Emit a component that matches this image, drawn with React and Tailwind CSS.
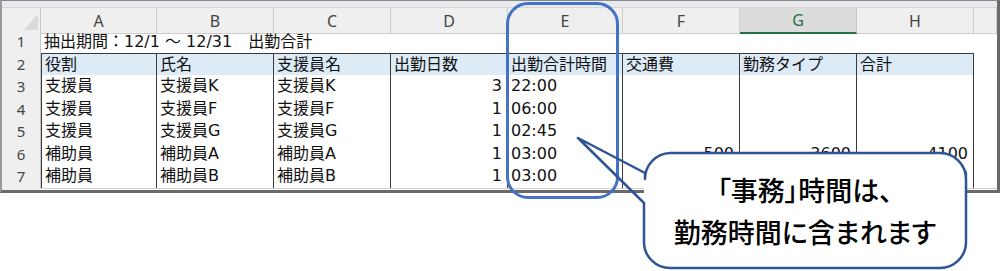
import React from 'react';

const letters = ['A', 'B', 'C', 'D', 'E', 'F', 'G', 'H', ''];

const rows = [
  ['役割', '氏名', '支援員名', '出勤日数', '出勤合計時間', '交通費', '勤務タイプ', '合計'],
  ['支援員', '支援員K', '支援員K', 3, '22:00', '', '', ''],
  ['支援員', '支援員F', '支援員F', 1, '06:00', '', '', ''],
  ['支援員', '支援員G', '支援員G', 1, '02:45', '', '', ''],
  ['補助員', '補助員A', '補助員A', 1, '03:00', 500, 3600, 4100],
  ['補助員', '補助員B', '補助員B', 1, '03:00', 500, 3600, 4100],
];

const rowHeights = ['h-[22px]', 'h-[23px]', 'h-[22px]', 'h-[23px]', 'h-[22px]', 'h-[23px]'];

function RowHead({ n }) {
  return (
    <div className="flex items-center justify-center bg-[#efefef] border-r border-b border-r-[#c8c8c8] border-b-[#dedede] text-[15px] text-[#444] font-['Noto_Sans',sans-serif]">
      {n}
    </div>
  );
}

function Cell({ value, header, first, col }) {
  const isNum = typeof value === 'number';
  const isTime = typeof value === 'string' && /^\d\d:\d\d$/.test(value);
  return (
    <div
      className={`flex items-center border-r border-b border-[#3a3a3a] overflow-hidden whitespace-nowrap text-[16px] text-[#111] ${
        header ? 'bg-[#ddebf7] border-t' : 'bg-white'
      } ${col === 0 ? 'border-l' : ''} ${isNum ? 'justify-end pr-[5px]' : 'pl-[3px]'} ${
        isNum || isTime ? "font-['DejaVu_Sans',sans-serif]" : ''
      }`}
    >
      {value}
    </div>
  );
}

export default function App() {
  return (
    <div className="relative w-[1000px] h-[271px] bg-white overflow-hidden font-['DejaVu_Sans','Noto_Sans_CJK_JP',sans-serif]">
      {/* Spreadsheet frame */}
      <div className="w-[1000px] border-t border-l-2 border-r-[3px] border-b-[3px] border-t-[#8a8a8a] border-l-[#9a9a9a] border-r-[#6a6a6a] border-b-[#6a6a6a]">
        <div className="h-[7px] bg-[#e9ebee] border-b border-[#d6d6d6]" />

        {/* Column headers */}
        <div className="grid grid-cols-[39px_116px_117px_117px_117px_115px_117px_117px_117px_1fr] h-[22px]">
          <div className="flex items-end justify-end bg-[#efefef] border-r border-b border-[#c8c8c8] pr-[2px] pb-[2px]">
            <svg width="15" height="17" viewBox="0 0 15 17">
              <polygon points="15,0 15,17 0,17" fill="#d9d9d9" />
            </svg>
          </div>
          {letters.map((l, i) =>
            l === 'G' ? (
              <div
                key={i}
                className="flex items-center justify-center bg-[#dcdcdc] border-r border-[#c8c8c8] border-b-2 border-b-[#217346] text-[16px] text-[#217346] font-['Noto_Sans',sans-serif]"
              >
                {l}
              </div>
            ) : (
              <div
                key={i}
                className="flex items-center justify-center bg-[#efefef] border-r border-b border-[#cdcdcd] text-[16px] text-[#444] font-['Noto_Sans',sans-serif]"
              >
                {l}
              </div>
            )
          )}
        </div>

        {/* Row 1: title */}
        <div className="grid grid-cols-[39px_116px_117px_117px_117px_115px_117px_117px_117px_1fr] h-[23px]">
          <RowHead n={1} />
          <div className="flex items-center pl-[3px] whitespace-nowrap text-[16px] text-[#111] overflow-visible">
            抽出期間：12/1 ～ 12/31　出勤合計
          </div>
        </div>

        {/* Rows 2-7 */}
        {rows.map((r, ri) => (
          <div
            key={ri}
            className={`grid grid-cols-[39px_116px_117px_117px_117px_115px_117px_117px_117px_1fr] ${rowHeights[ri]}`}
          >
            <RowHead n={ri + 2} />
            {r.map((v, ci) => (
              <Cell key={ci} value={v} header={ri === 0} col={ci} />
            ))}
            <div className="bg-white" />
          </div>
        ))}

        <div className="grid grid-cols-[39px_1fr] h-[2px]">
          <div className="bg-[#efefef]" />
          <div className="border-t border-[#d0d0d0]" />
        </div>
      </div>

      {/* Highlight around column E */}
      <div className="absolute left-[506px] top-[2px] w-[113px] h-[197px] rounded-[22px] border-[3px] border-[#4472c4]" />

      {/* Callout */}
      <svg className="absolute left-0 top-0 pointer-events-none" width="1000" height="271" viewBox="0 0 1000 271">
        <path
          d="M670 153 H940 A26 26 0 0 1 966 179 V242 A26 26 0 0 1 940 268 H670 A26 26 0 0 1 644 242 V179 A26 26 0 0 1 670 153 Z"
          fill="#ffffff"
        />
        <path
          d="M670 153 H940 A26 26 0 0 1 966 179 V242 A26 26 0 0 1 940 268 H670 A26 26 0 0 1 644 242 V203 L578 138 L645 173 V179 A26 26 0 0 1 670 153 Z"
          fill="none"
          stroke="#2f5597"
          strokeWidth="2.5"
          strokeLinejoin="round"
        />
      </svg>
      <div className="absolute left-[644px] top-[153px] w-[322px] h-[115px] flex flex-col items-center justify-center font-['Noto_Sans_CJK_JP',sans-serif] font-medium text-[27px] leading-[42px] text-black [font-feature-settings:'palt']">
        <div>「事務」時間は、</div>
        <div>勤務時間に含まれます</div>
      </div>
    </div>
  );
}
